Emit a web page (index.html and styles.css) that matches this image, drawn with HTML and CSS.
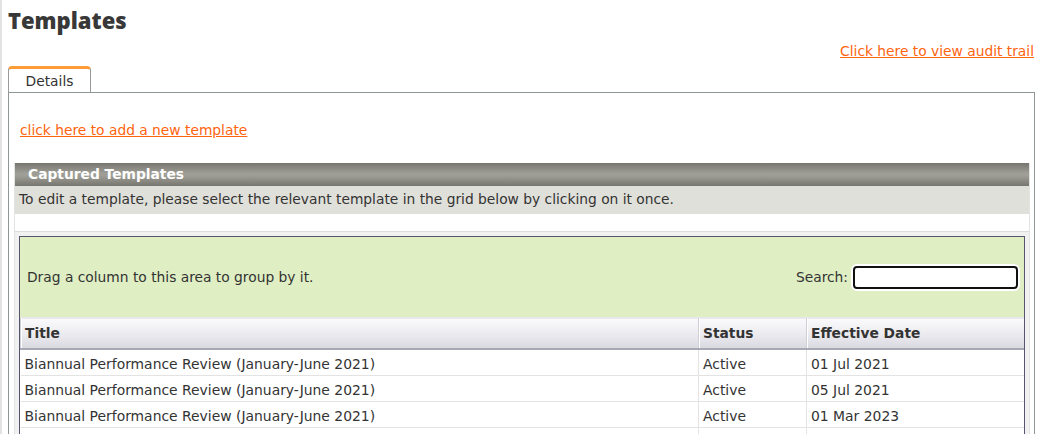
FILE: index.html
```html
<!DOCTYPE html>
<html>
<head>
<meta charset="utf-8">
<link rel="stylesheet" href="styles.css">
</head>
<body>
<div class="page">
  <h1 class="page-title">Templates</h1>
  <div class="audit-row"><a href="#" class="link">Click here to view audit trail</a></div>
  <div class="tabs"><div class="tab">Details</div></div>
  <div class="panel">
    <div class="add-row"><a href="#" class="link">click here to add a new template</a></div>
    <div class="box">
      <div class="box-head">Captured Templates</div>
      <div class="box-desc">To edit a template, please select the relevant template in the grid below by clicking on it once.</div>
      <div class="box-spacer"></div>
      <div class="grid-wrap">
        <div class="grid">
          <div class="group-bar">
            <span>Drag a column to this area to group by it.</span>
            <label class="search">Search: <input type="text" class="search-input"></label>
          </div>
          <table class="table">
            <colgroup><col class="c-title"><col class="c-status"><col class="c-date"></colgroup>
            <thead>
              <tr><th>Title</th><th>Status</th><th>Effective Date</th></tr>
            </thead>
            <tbody>
              <tr><td>Biannual Performance Review (January-June 2021)</td><td>Active</td><td>01 Jul 2021</td></tr>
              <tr><td>Biannual Performance Review (January-June 2021)</td><td>Active</td><td>05 Jul 2021</td></tr>
              <tr><td>Biannual Performance Review (January-June 2021)</td><td>Active</td><td>01 Mar 2023</td></tr>
              <tr><td>&nbsp;</td><td></td><td></td></tr>
            </tbody>
          </table>
        </div>
      </div>
    </div>
  </div>
</div>
</body>
</html>
```
FILE: styles.css
```css
html, body { margin: 0; padding: 0; background: #fff; }
body {
  font-family: "DejaVu Sans", Verdana, sans-serif;
  font-size: 13.8px;
  color: #333;
  height: 434px;
  overflow: hidden;
}
.page {
  border-left: 2px solid #e2e2e2;
  padding: 7px 3px 0 6px;
  min-height: 600px;
}
.page-title {
  margin: 0;
  font-family: "Open Sans", sans-serif;
  font-weight: 800;
  font-size: 22px;
  line-height: 26px;
  color: #383838;
}
.audit-row {
  text-align: right;
  margin-top: 10px;
  padding-right: 1px;
  line-height: 16px;
}
.link { color: #ff6410; text-decoration: underline; }
.tabs { display: flex; margin-top: 7px; }
.tab {
  width: 81px;
  height: 23px;
  border: 1px solid #9a9a9a;
  border-top: 3px solid #ff9c38;
  border-bottom: none;
  border-radius: 4px 4px 0 0;
  text-align: center;
  line-height: 24px;
  color: #333;
}
.panel {
  border: 1px solid #8f9696;
  border-bottom: none;
  padding: 29px 4px 0 5px;
}
.add-row { padding-left: 6px; line-height: 16px; }
.box {
  margin-top: 25px;
  border-left: 1px solid #e3e3e3;
  border-right: 1px solid #e3e3e3;
}
.box-head {
  height: 23px;
  line-height: 23px;
  padding-left: 13px;
  color: #fff;
  font-weight: bold;
  background: linear-gradient(#76766e 0%, #9e9e96 45%, #9e9e96 55%, #76766e 100%);
}
.box-desc {
  background: #e0e0da;
  height: 28px;
  line-height: 27px;
  padding-left: 4px;
  color: #333;
}
.box-spacer { height: 17px; background: #fff; border-bottom: 1px solid #dcdcdc; }
.grid-wrap { background: #f1f1f1; padding: 4px 4px 0 4px; }
.grid { border: 1px solid #55566e; border-bottom: none; background: #fff; }
.group-bar {
  height: 80px;
  background: #dfeec3;
  display: flex;
  align-items: center;
  justify-content: space-between;
  padding: 0 6px 0 7px;
}
.search { display: flex; align-items: center; gap: 5px; }
.search-input {
  width: 161px;
  height: 19px;
  box-sizing: content-box;
  padding: 0;
  border: 2px solid #111;
  border-radius: 4px;
  background: #fff;
  box-shadow: 0 0 0 2px #fff;
  outline: none;
}
.table {
  width: 100%;
  border-collapse: collapse;
  table-layout: fixed;
}
.c-title { width: 678px; }
.c-status { width: 108px; }
.table th {
  height: 30px;
  text-align: left;
  font-weight: bold;
  color: #333;
  padding: 0 0 0 4px;
  background: linear-gradient(#fbfbfc 0%, #ececf0 50%, #d8d8e0 100%);
  border-top: 1px solid #e8e8ec;
  border-bottom: 2px solid #a8a8b4;
  border-left: 1px solid #cfcfd6;
  box-shadow: inset 1px 0 0 #fff;
}
.table td {
  height: 22px;
  padding: 3px 0 0 4px;
  font-size: 13.9px;
  border-bottom: 1px solid #e3e3e3;
  border-left: 1px solid #e3e3e3;
  white-space: nowrap;
  overflow: hidden;
}
.table td:first-child { border-left: none; }
```
